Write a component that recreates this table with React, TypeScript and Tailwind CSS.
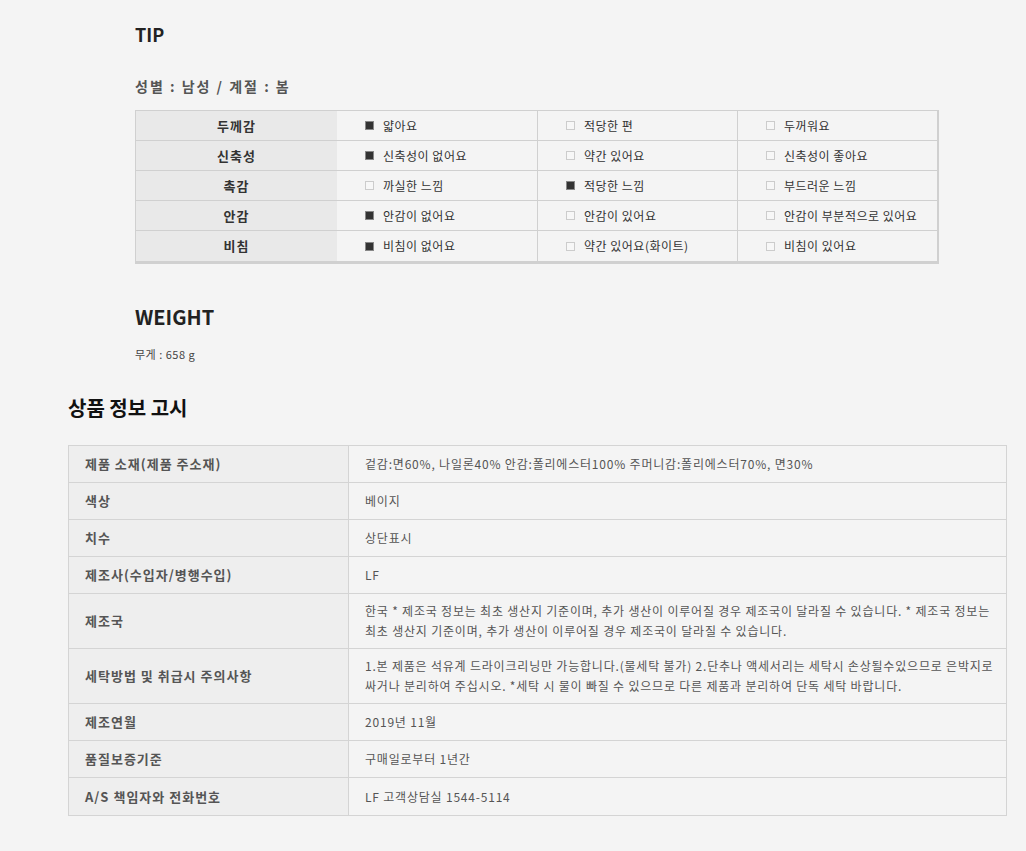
import React from 'react';

type TipRow = { label: string; options: { text: string; on: boolean }[] };

const tipRows: TipRow[] = [
  { label: '두께감', options: [{ text: '얇아요', on: true }, { text: '적당한 편', on: false }, { text: '두꺼워요', on: false }] },
  { label: '신축성', options: [{ text: '신축성이 없어요', on: true }, { text: '약간 있어요', on: false }, { text: '신축성이 좋아요', on: false }] },
  { label: '촉감', options: [{ text: '까실한 느낌', on: false }, { text: '적당한 느낌', on: true }, { text: '부드러운 느낌', on: false }] },
  { label: '안감', options: [{ text: '안감이 없어요', on: true }, { text: '안감이 있어요', on: false }, { text: '안감이 부분적으로 있어요', on: false }] },
  { label: '비침', options: [{ text: '비침이 없어요', on: true }, { text: '약간 있어요(화이트)', on: false }, { text: '비침이 있어요', on: false }] },
];

const noticeRows: { label: string; value: string; tall?: boolean }[] = [
  { label: '제품 소재(제품 주소재)', value: '겉감:면60%, 나일론40% 안감:폴리에스터100% 주머니감:폴리에스터70%, 면30%' },
  { label: '색상', value: '베이지' },
  { label: '치수', value: '상단표시' },
  { label: '제조사(수입자/병행수입)', value: 'LF' },
  { label: '제조국', value: '한국 * 제조국 정보는 최초 생산지 기준이며, 추가 생산이 이루어질 경우 제조국이 달라질 수 있습니다. * 제조국 정보는 최초 생산지 기준이며, 추가 생산이 이루어질 경우 제조국이 달라질 수 있습니다.', tall: true },
  { label: '세탁방법 및 취급시 주의사항', value: '1.본 제품은 석유계 드라이크리닝만 가능합니다.(물세탁 불가) 2.단추나 액세서리는 세탁시 손상될수있으므로 은박지로 싸거나 분리하여 주십시오. *세탁 시 물이 빠질 수 있으므로 다른 제품과 분리하여 단독 세탁 바랍니다.', tall: true },
  { label: '제조연월', value: '2019년 11월' },
  { label: '품질보증기준', value: '구매일로부터 1년간' },
  { label: 'A/S 책임자와 전화번호', value: 'LF 고객상담실 1544-5114' },
];

const Box = ({ on }: { on: boolean }) =>
  on ? (
    <span className="inline-block w-[9px] h-[9px] bg-[#333] border border-[#888] shrink-0" />
  ) : (
    <span className="inline-block w-[9px] h-[9px] bg-[#f7f7f7] border border-[#ccc] shrink-0" />
  );

export default function App() {
  return (
    <div
      className="min-h-[851px] bg-[#f4f4f4] text-[#333]"
      style={{ fontFamily: '"Noto Sans CJK KR", "Noto Sans", sans-serif' }}
    >
      {/* TIP */}
      <div className="pl-[135px] pt-[22px]">
        <h2 className="text-[18px] font-bold leading-[24px] text-[#222]">TIP</h2>
        <p className="mt-[30px] text-[14px] font-bold leading-[20px] text-[#555] tracking-[2px]">성별 : 남성 / 계절 : 봄</p>
        <div className="mt-[14px] w-[804px] border-t border-l border-[#d0d0d0] border-r-2 border-b-[3px]">
          {tipRows.map((r) => (
            <div key={r.label} className="grid grid-cols-[201px_200px_200px_1fr] h-[30px] border-b border-[#d0d0d0] last:border-b-0 text-[12px]">
              <div className="bg-[#e9e9e9] flex items-center justify-center font-bold text-[13px] text-[#333] tracking-[1px]">{r.label}</div>
              {r.options.map((o, i) => (
                <div
                  key={i}
                  className={`flex items-center gap-[9px] pl-[28px] text-[#333] tracking-[0.5px] ${i > 0 ? 'border-l border-[#d0d0d0]' : ''}`}
                >
                  <Box on={o.on} />
                  <span>{o.text}</span>
                </div>
              ))}
            </div>
          ))}
        </div>

        <h2 className="mt-[40px] text-[20px] font-bold leading-[26px] text-[#222]">WEIGHT</h2>
        <p className="mt-[16px] text-[11px] leading-[16px] text-[#444] tracking-[0.5px]">무게 : 658 g</p>
      </div>

      {/* 상품 정보 고시 */}
      <div className="pl-[68px] pr-[19px] pt-[32px] pb-[36px]">
        <h2 className="text-[20px] font-bold leading-[28px] text-[#111]">상품 정보 고시</h2>
        <div className="mt-[23px] border border-[#d4d4d4] text-[12px]">
          {noticeRows.map((r) => (
            <div
              key={r.label}
              className={`grid grid-cols-[280px_1fr] border-b border-[#d4d4d4] last:border-b-0 ${r.tall ? 'min-h-[55px]' : 'h-[37px]'}`}
            >
              <div className="bg-[#eeeeee] border-r border-[#d4d4d4] flex items-center pl-[16px] font-bold text-[13px] text-[#555] tracking-[1px]">
                {r.label}
              </div>
              <div className="flex items-center pl-[16px] pr-[2px] leading-[20px] text-[#555] tracking-[0.8px]">{r.value}</div>
            </div>
          ))}
        </div>
      </div>
    </div>
  );
}
